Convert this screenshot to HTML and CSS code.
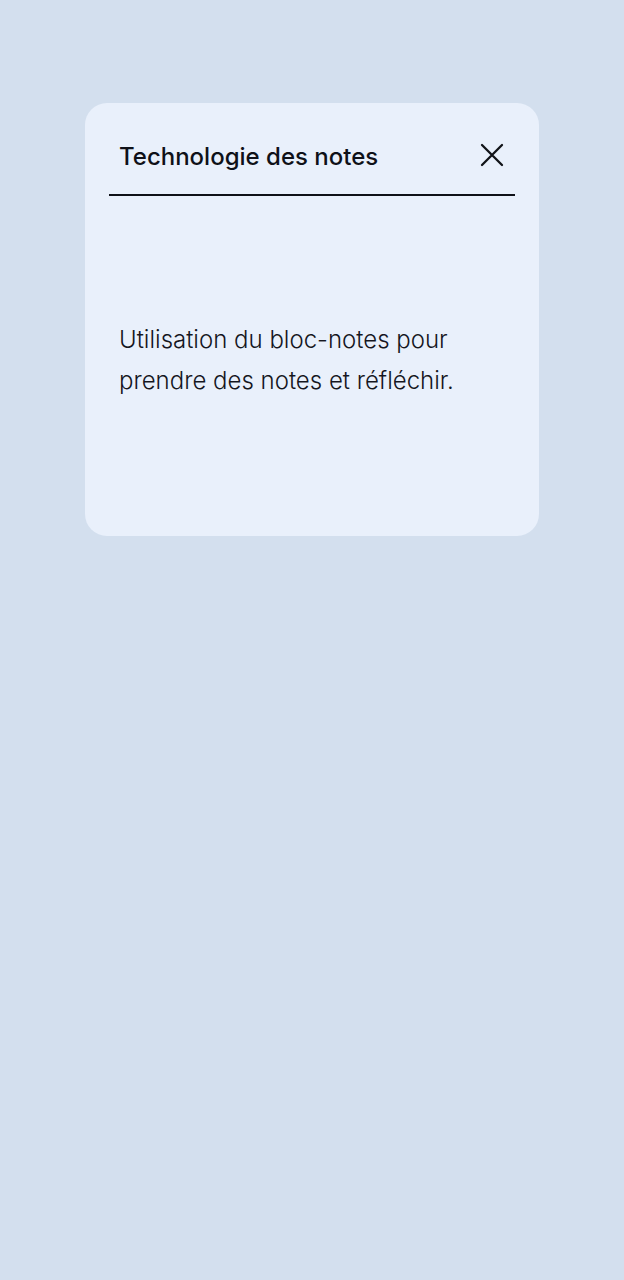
FILE: index.html
```html
<!DOCTYPE html>
<html lang="fr">
<head>
<meta charset="utf-8">
<title>Technologie des notes</title>
<link rel="stylesheet" href="styles.css">
</head>
<body>
<main class="page">
  <section class="card">
    <header class="card-header">
      <h1 class="card-title">Technologie des notes</h1>
      <button class="close-btn" aria-label="Fermer">
        <svg width="26" height="26" viewBox="0 0 26 26" fill="none" stroke="#111318" stroke-width="2.3" stroke-linecap="round">
          <path d="M3 3 L23 23 M23 3 L3 23"/>
        </svg>
      </button>
    </header>
    <div class="card-body">
      <p class="card-text">Utilisation du bloc-notes pour prendre des notes et réfléchir.</p>
    </div>
  </section>
</main>
</body>
</html>
```
FILE: styles.css
```css
html, body {
  margin: 0;
  padding: 0;
}
body {
  background: #d3dfee;
  font-family: Inter, "Noto Sans", sans-serif;
  color: #15161e;
  min-height: 1280px;
}
.page {
  padding: 103px 85px 0 85px;
}
.card {
  background: #e9f0fb;
  border-radius: 22px;
  padding: 0 24px;
  height: 433px;
  box-sizing: border-box;
}
.card-header {
  display: flex;
  align-items: center;
  justify-content: space-between;
  padding: 40px 10px 23px 10px;
  border-bottom: 2px solid #0f1118;
}
.card-title {
  margin: 0;
  font-size: 24px;
  line-height: 28px;
  font-weight: 500;
  color: #0f1118;
}
.close-btn {
  background: none;
  border: 0;
  padding: 0;
  margin: -5px 0 0 0;
  width: 26px;
  height: 26px;
  display: flex;
}
.card-body {
  padding: 123px 10px 0 10px;
}
.card-text {
  margin: 0;
  font-size: 24px;
  line-height: 41px;
  font-weight: 300;
  color: #15161e;
  max-width: 370px;
}
```
